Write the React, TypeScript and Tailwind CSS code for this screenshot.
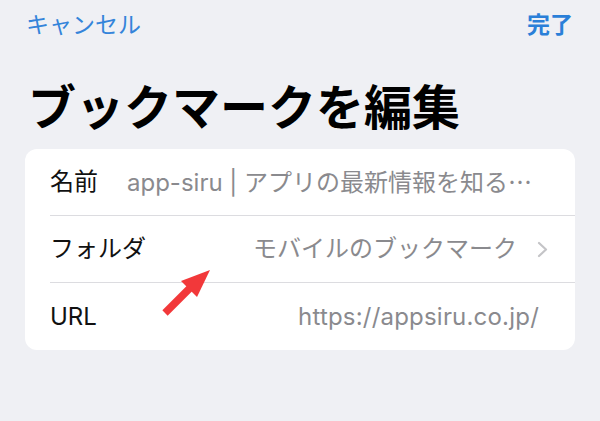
import React from "react";

const rows = [
  { label: "名前", value: "app-siru | アプリの最新情報を知る", ellipsis: true, align: "left", chevron: false },
  { label: "フォルダ", value: "モバイルのブックマーク", ellipsis: false, align: "right", chevron: true },
  { label: "URL", value: "https://appsiru.co.jp/", ellipsis: false, align: "right", chevron: false },
];

export default function App() {
  return (
    <div
      className="relative w-[600px] h-[421px] overflow-hidden bg-[#eff0f4]"
      style={{ fontFamily: 'Inter, "Noto Sans CJK JP", sans-serif' }}
    >
      {/* Nav bar */}
      <div className="flex items-center justify-between h-[50px] pl-[26px] pr-[27px]">
        <button className="text-[23px] text-[#3484da] leading-none">キャンセル</button>
        <button className="text-[23px] font-semibold text-[#2a7fd8] leading-none">完了</button>
      </div>

      {/* Title */}
      <div className="h-[99px] flex items-center pl-[28px] pt-[16px]">
        <h1 className="text-[48px] font-bold leading-none text-black">ブックマークを編集</h1>
      </div>

      {/* Form card */}
      <div className="mx-[25px] bg-white rounded-[12px] overflow-hidden">
        {rows.map((row, i) => (
          <div key={row.label} className="pl-[25px]">
            <div
              className={`flex items-center h-[67px] pr-[27px] ${
                i < rows.length - 1 ? "border-b border-[#dcdce0]" : ""
              }`}
            >
              <span className="text-[24px] text-[#111] whitespace-nowrap">{row.label}</span>
              <span
                className={`flex-1 text-[24px] text-[#8a8a8e] whitespace-nowrap ${
                  row.align === "left" ? "ml-[29px] text-left" : "text-right"
                } ${row.label === "URL" ? "mr-[9px] tracking-[0.2px]" : ""}`}
              >
                {row.value}
                {row.ellipsis && <span style={{ fontFamily: '"Noto Sans CJK JP", sans-serif' }}>…</span>}
              </span>
              {row.chevron && (
                <svg width="11" height="17" viewBox="0 0 11 17" className="ml-[20px]">
                  <path d="M2 2 L9 8.5 L2 15" fill="none" stroke="#c4c4c7" strokeWidth="2.2" strokeLinecap="round" strokeLinejoin="round" />
                </svg>
              )}
            </div>
          </div>
        ))}
      </div>

      {/* Red annotation arrow */}
      <svg className="absolute left-[160px] top-[262px]" width="56" height="56" viewBox="0 0 56 56">
        <line x1="5" y1="51" x2="31" y2="25" stroke="#f2383a" strokeWidth="7.5" />
        <polygon points="50,8 21,19 37,35" fill="#f2383a" />
      </svg>
    </div>
  );
}
